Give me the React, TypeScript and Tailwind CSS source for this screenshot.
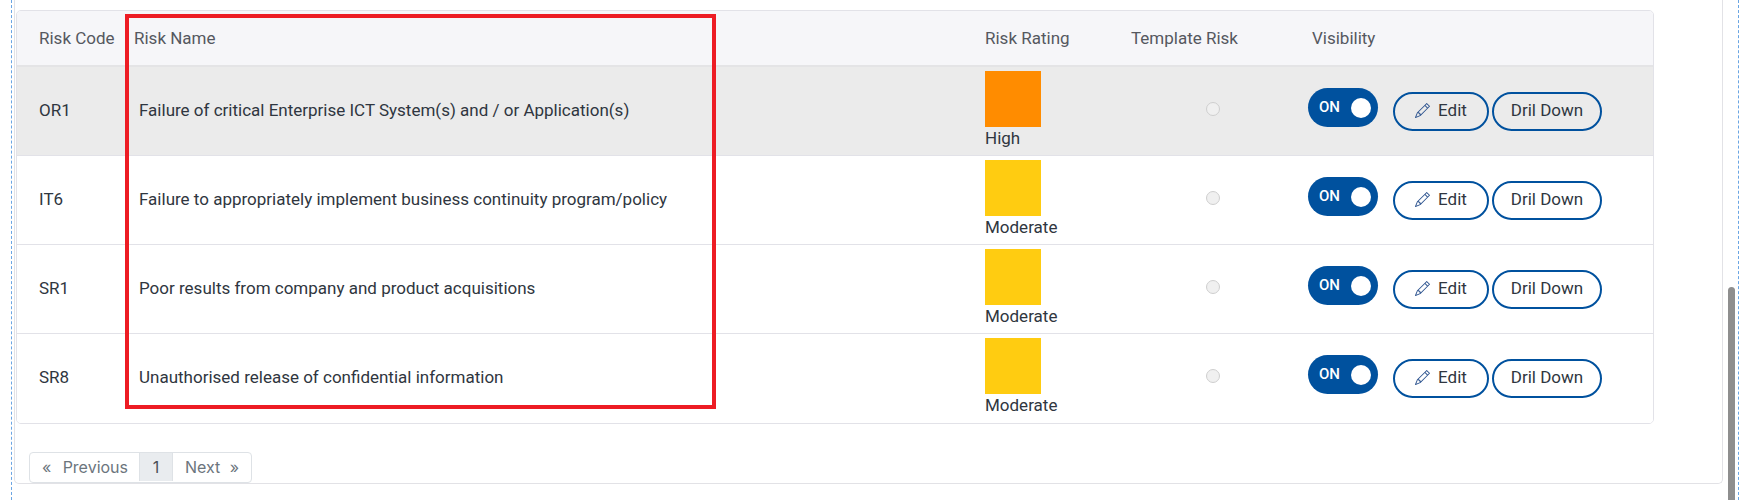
import { FC } from "react";
import { BsPencil } from "react-icons/bs";

const risks = [
  { code: "OR1", name: "Failure of critical Enterprise ICT System(s) and / or Application(s)", rating: "High", color: "bg-[#ff8c00]", active: true },
  { code: "IT6", name: "Failure to appropriately implement business continuity program/policy", rating: "Moderate", color: "bg-[#ffcc11]", active: false },
  { code: "SR1", name: "Poor results from company and product acquisitions", rating: "Moderate", color: "bg-[#ffcc11]", active: false },
  { code: "SR8", name: "Unauthorised release of confidential information", rating: "Moderate", color: "bg-[#ffcc11]", active: false },
];

const cols = "grid grid-cols-[117px_851px_146px_181px_1fr]";

const App: FC = () => {
  return (
    <div className="relative h-[500px] w-[1748px] overflow-hidden bg-white pl-[11px] pr-[9px] font-['Roboto',sans-serif] text-[17px] text-[#2f3640]">
      <div className="h-full border-x border-dashed border-[#6aa5e3] pl-[2px] pr-[15px]">
        <div className="h-[484px] rounded-b-[5px] border-x border-b border-[#e2e2e6] pl-[1px] pr-[68px] pt-[10px]">
          {/* Table */}
          <div className="w-[1638px] overflow-hidden rounded-[5px] border border-[#e2e2e8]">
            <div className={`${cols} h-[56px] items-center border-b-2 border-[#e4e4e6] bg-[#f6f6f9] pt-[1px] text-[#55585f]`}>
              <div className="pl-[22px]">Risk Code</div>
              <div>Risk Name</div>
              <div>Risk Rating</div>
              <div>Template Risk</div>
              <div>Visibility</div>
            </div>
            {risks.map((risk) => (
              <div
                key={risk.code}
                className={`${cols} h-[89px] items-center border-b border-[#e2e2e8] last:border-b-transparent ${risk.active ? "bg-[#ebebeb]" : "bg-white"}`}
              >
                <div className="pl-[22px]">{risk.code}</div>
                <div className="pl-[5px]">{risk.name}</div>
                <div className="flex h-full flex-col pt-[4px]">
                  <div className={`h-[56px] w-[56px] ${risk.color}`} />
                  <div className="leading-[22px]">{risk.rating}</div>
                </div>
                <div className="pb-[4px] pl-[75px]">
                  <div className="h-[14px] w-[14px] rounded-full border border-[#cfcfcf] bg-[#f0f0f0]" />
                </div>
                <div className="flex items-center">
                  <div className="-ml-[4px] mb-[7px] flex h-[39px] w-[70px] items-center justify-between rounded-full bg-[#00519e] pl-[11px] pr-[7px] text-[15px] font-medium text-white">
                    <span className="pb-[1px]">ON</span>
                    <span className="h-[20px] w-[20px] rounded-full bg-white" />
                  </div>
                  <button className="ml-[15px] mt-[1px] flex h-[39px] w-[96px] items-center justify-center gap-[8px] rounded-full border-2 border-[#00519e] pb-[2px]">
                    <BsPencil className="text-[15px] text-[#2f5590]" />
                    Edit
                  </button>
                  <button className="ml-[3px] mt-[1px] h-[39px] w-[110px] rounded-full border-2 border-[#00519e] pb-[2px]">
                    Dril Down
                  </button>
                </div>
              </div>
            ))}
          </div>

          {/* Pagination */}
          <div className="ml-[13px] mt-[28px] flex h-[31px] w-[223px] overflow-hidden rounded-[4px] border border-[#dee2e6] pb-[1px] font-['Inter',sans-serif] text-[16px] text-[#6c757d]">
            <div className="flex w-[110px] items-center justify-between border-r border-[#dee2e6] pl-[12px] pr-[11px]">
              <span>«</span>
              <span>Previous</span>
            </div>
            <div className="flex w-[33px] items-center justify-center border-r border-[#dee2e6] bg-[#e9ecef] text-[#495057]">1</div>
            <div className="flex flex-1 items-center justify-between pl-[12px] pr-[12px]">
              <span>Next</span>
              <span>»</span>
            </div>
          </div>
        </div>
      </div>

      {/* Scrollbar thumb */}
      <div className="absolute left-[1728px] top-[287px] h-[220px] w-[7px] rounded-t-full bg-[#8e8e8e]" />

      {/* Red highlight around the Risk Name column */}
      <div className="absolute left-[125px] top-[14px] h-[395px] w-[591px] border-4 border-[#ed1c24]" />
    </div>
  );
};

export default App;
